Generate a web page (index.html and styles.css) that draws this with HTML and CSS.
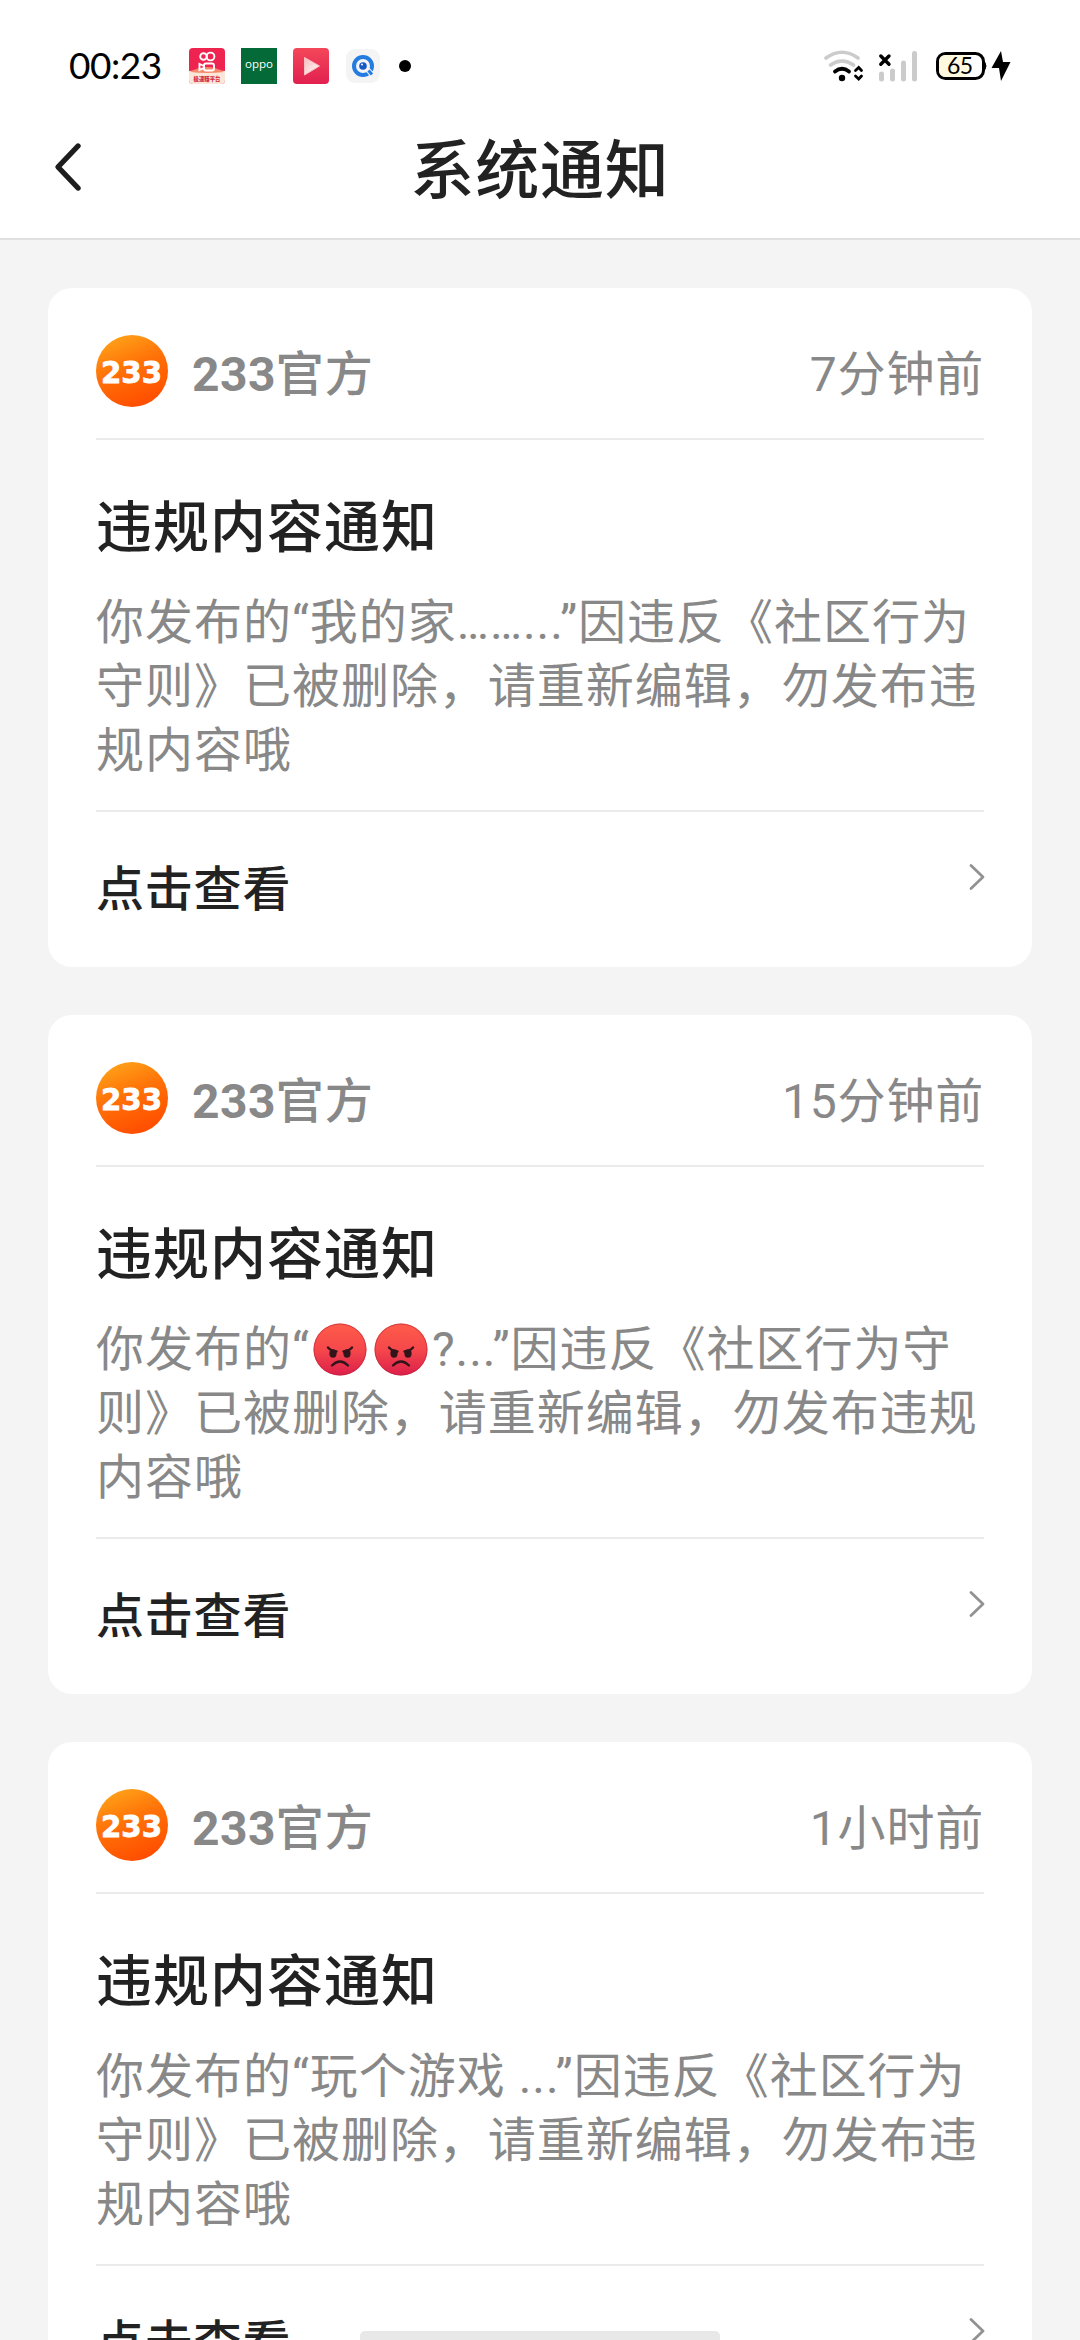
FILE: index.html
```html
<!DOCTYPE html>
<html lang="zh-CN">
<head>
<meta charset="utf-8">
<title>系统通知</title>
<link rel="stylesheet" href="styles.css">
</head>
<body>
<svg class="defs" width="0" height="0" aria-hidden="true">
  <defs>
    <linearGradient id="logo-fill" x1="0.2" y1="0" x2="0.6" y2="1">
      <stop offset="0" stop-color="#ffa51a"/><stop offset="0.45" stop-color="#ff7308"/><stop offset="1" stop-color="#ff4d00"/>
    </linearGradient>
    <linearGradient id="angry-fill" x1="0" y1="0" x2="0" y2="1">
      <stop offset="0" stop-color="#ff5c4a"/><stop offset="0.5" stop-color="#f5484b"/><stop offset="1" stop-color="#dc1f4b"/>
    </linearGradient>
    <linearGradient id="play-fill" x1="0" y1="0" x2="0" y2="1">
      <stop offset="0" stop-color="#f4475a"/><stop offset="1" stop-color="#e2204f"/>
    </linearGradient>
    <linearGradient id="tri-fill" x1="0" y1="0" x2="1" y2="1">
      <stop offset="0" stop-color="#fbb9be"/><stop offset="1" stop-color="#fff"/>
    </linearGradient>
    <symbol id="logo" viewBox="0 0 72 72">
      <circle cx="36" cy="36" r="36" fill="url(#logo-fill)"/>
      <text class="logo-text" x="5" y="47.500" textLength="61" lengthAdjust="spacingAndGlyphs">233</text>
    </symbol>
    <symbol id="angry" viewBox="0 0 54 53">
      <ellipse cx="27" cy="26.500" rx="26.500" ry="26" fill="url(#angry-fill)"/>
      <ellipse cx="27" cy="26.500" rx="26" ry="25.500" fill="none" stroke="#b92438" stroke-opacity=".6"/>
      <g fill="#31151b"><ellipse cx="20" cy="30.500" rx="3.600" ry="4.200"/><ellipse cx="34" cy="30.500" rx="3.600" ry="4.200"/></g>
      <g fill="none" stroke="#31151b" stroke-width="2.400" stroke-linecap="round">
        <path d="M15 24.500Q18 28 23.500 28.500M39 24.500Q36 28 30.500 28.500"/>
        <path d="M19 42.500Q27 34.500 35 42.500"/>
      </g>
    </symbol>
    <symbol id="chevron" viewBox="0 0 16 28">
      <path d="M2 2.500L14 14 2 25.500" fill="none" stroke="#929292" stroke-width="2.800" stroke-linecap="round" stroke-linejoin="round"/>
    </symbol>
  </defs>
</svg>

<div class="screen">
  <header class="top">
    <div class="status">
      <span class="clock">00:23</span>
      <div class="apps">
        <svg width="36" height="36" viewBox="0 0 36 36">
          <rect width="36" height="36" rx="4" fill="#ee234f"/>
          <path d="M0 23Q18 21 36 23V32a4 4 0 0 1-4 4H4a4 4 0 0 1-4-4Z" fill="#fbe7d9"/>
          <path d="M1 24Q18 14 35 24Q18 26 1 24Z" fill="#f7896b"/>
          <g fill="none" stroke="#fff" stroke-width="1.900"><circle cx="14.500" cy="8.500" r="3.300"/><circle cx="21.500" cy="8.500" r="3.900"/><rect x="15" y="15.500" width="10" height="7" rx="2"/><path d="M15 18L10.500 16V22L15 20Z"/></g>
          <text class="app-caption" x="4.500" y="32.500" textLength="27" lengthAdjust="spacingAndGlyphs">极速赚平台</text>
        </svg>
        <svg width="36" height="36" viewBox="0 0 36 36">
          <rect width="36" height="36" fill="#046a38"/>
          <text class="oppo" x="4" y="20.200" textLength="28" lengthAdjust="spacingAndGlyphs">oppo</text>
        </svg>
        <svg width="36" height="36" viewBox="0 0 36 36">
          <rect width="36" height="36" rx="4" fill="url(#play-fill)"/>
          <path d="M11.500 9.500L26.500 18 11.500 27Z" fill="url(#tri-fill)" stroke="#f9c0c4" stroke-linejoin="round"/>
        </svg>
        <svg width="36" height="36" viewBox="0 0 36 36">
          <rect x="1" y="1" width="34" height="34" rx="9" fill="#f4f4f5"/>
          <circle cx="18" cy="18" r="9" fill="none" stroke="#247be0" stroke-width="4"/>
          <circle cx="18" cy="18" r="3.800" fill="#1659c7"/>
          <path d="M21.500 20.500L27 26.500" stroke="#f4f4f5" stroke-width="5"/>
          <path d="M23.500 22.500L27 26.500" stroke="#247be0" stroke-width="3"/>
          <circle cx="17" cy="16.500" r="1" fill="#fff"/>
        </svg>
      </div>
      <i class="dot"></i>
      <svg class="signals" width="194" height="36" viewBox="820 48 194 36">
        <g fill="none" stroke-linecap="round">
          <path d="M826 58Q842 46.500 858 58" stroke="#cbcbcb" stroke-width="3.600"/>
          <path d="M830.500 65Q842 57 853.500 65" stroke="#cbcbcb" stroke-width="3.600"/>
          <path d="M835 71.500Q842 66 849 71.500" stroke="#000" stroke-width="3.800"/>
          <path d="M855.500 70.500L858.700 67.500 861.500 70.500M855.500 76L858.700 79 861.500 76" stroke="#000" stroke-width="2.800"/>
          <path d="M880.800 56L889 64.200M889 56L880.800 64.200" stroke="#000" stroke-width="3.400"/>
          <path d="M881.500 74V79M892.500 71V79M903.500 63V79M914.500 53.500V79" stroke="#cbcbcb" stroke-width="5"/>
        </g>
        <circle cx="842" cy="78" r="3.200"/>
        <rect x="937.500" y="53.500" width="46" height="25" rx="8" fill="#fff" stroke="#000" stroke-width="3"/>
        <path d="M946 55H967V77H946Q939 77 939 70V62Q939 55 946 55Z" fill="#fff9df"/>
        <path d="M984.500 61.500Q987.500 66 984.500 70.500Z" stroke="#000"/>
        <path d="M1001 51L991.500 68H999L1001 81 1010.500 62H1003L1001 51Z"/>
        <text class="charge" x="947" y="73.500" textLength="26">65</text>
      </svg>
    </div>
    <div class="titlebar">
      <svg class="back" width="30" height="50" viewBox="0 0 30 50"><path d="M26 4L6 25 26 46" fill="none" stroke="#1d1d1d" stroke-width="5.400" stroke-linecap="round" stroke-linejoin="round"/></svg>
      <h1>系统通知</h1>
    </div>
  </header>

  <main class="list">
    <article class="card">
      <div class="from"><svg class="avatar"><use href="#logo"/></svg><b class="name">233<span>官方</span></b><time>7分钟前</time></div>
      <div class="content">
        <h2>违规内容通知</h2>
        <p>你发布的“我的家……...”因违反《社区行为<br>守则》已被删除，请重新编辑，勿发布违<br>规内容哦</p>
      </div>
      <div class="action"><span>点击查看</span><svg class="go"><use href="#chevron"/></svg></div>
    </article>

    <article class="card">
      <div class="from"><svg class="avatar"><use href="#logo"/></svg><b class="name">233<span>官方</span></b><time>15分钟前</time></div>
      <div class="content">
        <h2>违规内容通知</h2>
        <p>你发布的“<svg class="emoji"><use href="#angry"/></svg><svg class="emoji"><use href="#angry"/></svg>?...”因违反《社区行为守<br>则》已被删除，请重新编辑，勿发布违规<br>内容哦</p>
      </div>
      <div class="action"><span>点击查看</span><svg class="go"><use href="#chevron"/></svg></div>
    </article>

    <article class="card">
      <div class="from"><svg class="avatar"><use href="#logo"/></svg><b class="name">233<span>官方</span></b><time>1小时前</time></div>
      <div class="content">
        <h2>违规内容通知</h2>
        <p>你发布的“玩个游戏 ...”因违反《社区行为<br>守则》已被删除，请重新编辑，勿发布违<br>规内容哦</p>
      </div>
      <div class="action"><span>点击查看</span><svg class="go"><use href="#chevron"/></svg></div>
    </article>
  </main>
  <div class="gesture"></div>
</div>
</body>
</html>
```
FILE: styles.css
```css
* { box-sizing: border-box; }
body { margin: 0; background: #f4f4f4; font-family: Roboto, "Noto Sans CJK SC", sans-serif; }
svg { display: block; flex: none; }
.defs { position: absolute; }
.screen { position: relative; width: 1080px; height: 2340px; overflow: hidden; }

.top { height: 240px; background: #fff; border-bottom: 2px solid #e0e0e0; }
.status { display: flex; align-items: center; height: 132px; padding: 0 66px 0 69px; }
.clock { width: 120px; padding-bottom: 2px; font: 400 37px/48px Lato, sans-serif; color: #000; letter-spacing: -0.5px; white-space: nowrap; }
.apps { display: flex; gap: 16px; }
.dot { width: 12px; height: 12px; margin-left: 18px; border-radius: 50%; background: #000; }
.signals { margin-left: auto; }
.charge { font: 400 23px Lato, sans-serif; }
.oppo { font: 400 11px "Open Sans", sans-serif; fill: #fff; }
.app-caption { font: 900 6px "Noto Sans CJK SC", sans-serif; fill: #d32c3c; }

.titlebar { display: grid; grid-template-columns: 54px 1fr 54px; align-items: start; height: 80px; }
.back { width: 30px; height: 50px; margin: 10px 0 0 52px; }
h1 { margin: 0; text-align: center; font-size: 64px; line-height: 80px; font-weight: 500; letter-spacing: 0.8px; color: #222; }

.list { display: flex; flex-direction: column; gap: 48px; padding: 48px 48px 0; }
.card { flex: none; height: 679px; padding: 0 48px; border-radius: 24px; background: #fff; }
.from { display: flex; align-items: center; height: 152px; padding-top: 16px; border-bottom: 2px solid #ebebeb; color: #888; font-size: 48px; }
.avatar { width: 72px; height: 72px; }
.name { margin: 0 0 2px 24px; font-weight: 700; letter-spacing: 0.4px; }
.name span { font-weight: 500; letter-spacing: 1px; }
time { margin: 0 0 2px auto; letter-spacing: 0.8px; }
.logo-text { font: 700 31px "DejaVu Sans", sans-serif; fill: #fff; stroke: #fff; stroke-width: 0.8; }

.content { height: 372px; padding-top: 52px; border-bottom: 2px solid #ebebeb; }
h2 { margin: 0; font-size: 56px; line-height: 72px; font-weight: 500; letter-spacing: 1px; color: #222; }
p { margin: 26.5px 0 0; font-size: 48px; line-height: 64px; letter-spacing: 0.98px; color: #888; white-space: nowrap; }
.emoji { display: inline-block; width: 54px; height: 53px; margin: 0 3.5px; vertical-align: -10px; }

.action { display: flex; justify-content: space-between; padding-top: 43px; font-size: 48px; line-height: 70px; font-weight: 500; letter-spacing: 0.8px; color: #222; }
.go { width: 16px; height: 28px; margin: 8px -1px 0 0; }
.gesture { position: absolute; left: 360px; bottom: 0; width: 360px; height: 9px; border-radius: 5px 5px 0 0; background: #e8e8e8; }
```
